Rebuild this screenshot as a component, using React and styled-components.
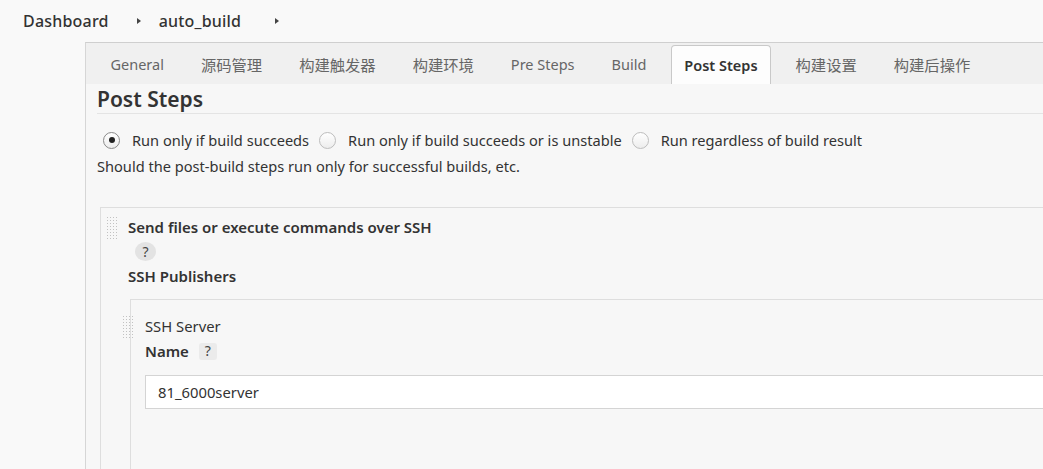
import React from 'react'
import styled, { createGlobalStyle } from 'styled-components'

const GlobalStyle = createGlobalStyle`
    html, body {
        margin: 0;
        padding: 0;
        background: #f9f9f9;
        font-family: "Noto Sans", "Noto Sans CJK SC", sans-serif;
        color: #333;
        overflow: hidden;
    }
`

const Page = styled.div`
    width: 1043px;
    height: 469px;
    overflow: hidden;
`

const Breadcrumb = styled.div`
    display: flex;
    align-items: center;
    height: 42px;
    padding-left: 23px;
    font-size: 16px;
    font-weight: 500;
    color: #333;
`

const Crumb = styled.span`
    margin-right: ${p => p.gap}px;
    letter-spacing: 0.2px;
`

const Arrow = styled.span`
    width: 0;
    height: 0;
    border-top: 3.5px solid transparent;
    border-bottom: 3.5px solid transparent;
    border-left: 4px solid #444;
    margin-right: 18px;
`

const Panel = styled.div`
    margin-left: 85px;
    width: 1100px;
    border-left: 1px solid #d6d6d6;
    border-top: 1px solid #cfcfcf;
    background: #f7f7f7;
    min-height: 430px;
`

const TabBar = styled.div`
    display: flex;
    align-items: flex-end;
    height: 41px;
    padding-left: 6px;
    background: #f0f0f0;
`

const Tab = styled.div`
    margin: 0 6.5px;
    padding: 0 12px;
    height: ${p => (p.active ? '39px' : '41px')};
    display: flex;
    align-items: center;
    font-size: ${p => (p.cjk ? '15.3px' : '14.5px')};
    color: ${p => (p.active ? '#333' : '#666')};
    font-weight: ${p => (p.active ? 600 : 400)};
    background: ${p => (p.active ? '#fdfdfd' : 'transparent')};
    border: ${p => (p.active ? '1px solid #c9c9c9' : 'none')};
    border-bottom: none;
    border-radius: 4px 4px 0 0;
    box-sizing: border-box;
`

const Content = styled.div`
    padding-left: 11px;
`

const Heading = styled.h2`
    margin: 0;
    height: 29px;
    line-height: 30px;
    font-size: 21px;
    font-weight: 600;
    color: #333;
    border-bottom: 1px solid #e4e4e4;
`

const RadioRow = styled.div`
    display: flex;
    align-items: center;
    margin-top: 16px;
    padding-left: 6px;
    height: 20px;
    font-size: 14.6px;
`

const Radio = styled.span`
    width: 17px;
    height: 17px;
    box-sizing: border-box;
    border-radius: 50%;
    border: 1px solid ${p => (p.checked ? '#8a8a8a' : '#bdbdbd')};
    background: linear-gradient(#ffffff, #ededed);
    display: flex;
    align-items: center;
    justify-content: center;
    margin-right: 12px;
    margin-left: ${p => (p.first ? '0' : '10px')};

    &::after {
        content: '';
        width: 6px;
        height: 6px;
        border-radius: 50%;
        background: ${p => (p.checked ? '#222' : 'transparent')};
    }
`

const Description = styled.div`
    margin-top: 6px;
    font-size: 14.6px;
    line-height: 20px;
`

const Section = styled.div`
    display: flex;
    align-items: flex-start;
    align-self: stretch;
    border-top: 1px solid #dedede;
    border-left: 1px solid #dedede;
    margin-top: ${p => p.top}px;
    margin-left: ${p => p.left}px;
    padding-top: ${p => p.padTop}px;
    padding-bottom: ${p => p.padBottom}px;
`

const Handle = styled.div`
    flex: none;
    width: 13px;
    height: 23px;
    margin-left: ${p => p.offset}px;
    margin-right: ${p => p.gap}px;
    margin-top: -1px;
    background-image: radial-gradient(circle, #c2c2c2 0.8px, transparent 1px);
    background-size: 3px 3px;
`

const SectionBody = styled.div`
    flex: 1;
    display: flex;
    flex-direction: column;
    align-items: flex-start;
`

const Title = styled.div`
    font-size: ${p => (p.bold ? '15px' : '14.8px')};
    line-height: 20px;
    font-weight: ${p => (p.bold ? 600 : 400)};
    color: #333;
    display: flex;
    align-items: center;
    margin-top: ${p => p.top || 0}px;
`

const Help = styled.span`
    display: inline-flex;
    align-items: center;
    justify-content: center;
    width: ${p => (p.small ? '18px' : '21px')};
    height: ${p => (p.small ? '17px' : '19px')};
    border-radius: ${p => (p.small ? '3px' : '50%')};
    background: ${p => (p.small ? '#ebebeb' : '#e3e3e3')};
    font-size: 14px;
    font-weight: 400;
    color: #444;
    margin-left: ${p => p.left}px;
    margin-top: ${p => p.top || 0}px;
`

const Input = styled.div`
    margin-top: 14px;
    align-self: stretch;
    height: 34px;
    box-sizing: border-box;
    border: 1px solid #d4d4d4;
    background: #fff;
    display: flex;
    align-items: center;
    padding-left: 12px;
    font-size: 14.8px;
    color: #333;
`

const tabs = ['General', '源码管理', '构建触发器', '构建环境', 'Pre Steps', 'Build', 'Post Steps', '构建设置', '构建后操作']

const App = () => {
    return (
        <Page>
            <GlobalStyle />
            <Breadcrumb>
                <Crumb gap={28}>Dashboard</Crumb>
                <Arrow />
                <Crumb gap={34}>auto_build</Crumb>
                <Arrow />
            </Breadcrumb>
            <Panel>
                <TabBar>
                    {tabs.map((t, i) => (
                        <Tab key={i} active={t === 'Post Steps'} cjk={/[^\x00-\x7f]/.test(t)}>{t}</Tab>
                    ))}
                </TabBar>
                <Content>
                    <Heading>Post Steps</Heading>
                    <RadioRow>
                        <Radio checked first />
                        Run only if build succeeds
                        <Radio />
                        Run only if build succeeds or is unstable
                        <Radio />
                        Run regardless of build result
                    </RadioRow>
                    <Description>Should the post-build steps run only for successful builds, etc.</Description>
                    <Section top={31} left={3} padTop={9} padBottom={0}>
                        <Handle offset={5} gap={9} />
                        <SectionBody>
                            <Title bold>Send files or execute commands over SSH</Title>
                            <Help left={7} top={5}>?</Help>
                            <Title bold top={5}>SSH Publishers</Title>
                            <Section top={13} left={2} padTop={16} padBottom={80}>
                                <Handle offset={-9} gap={10} />
                                <SectionBody>
                                    <Title>SSH Server</Title>
                                    <Title bold top={5}>
                                        Name
                                        <Help small left={10}>?</Help>
                                    </Title>
                                    <Input>81_6000server</Input>
                                </SectionBody>
                            </Section>
                        </SectionBody>
                    </Section>
                </Content>
            </Panel>
        </Page>
    )
}

export default App
